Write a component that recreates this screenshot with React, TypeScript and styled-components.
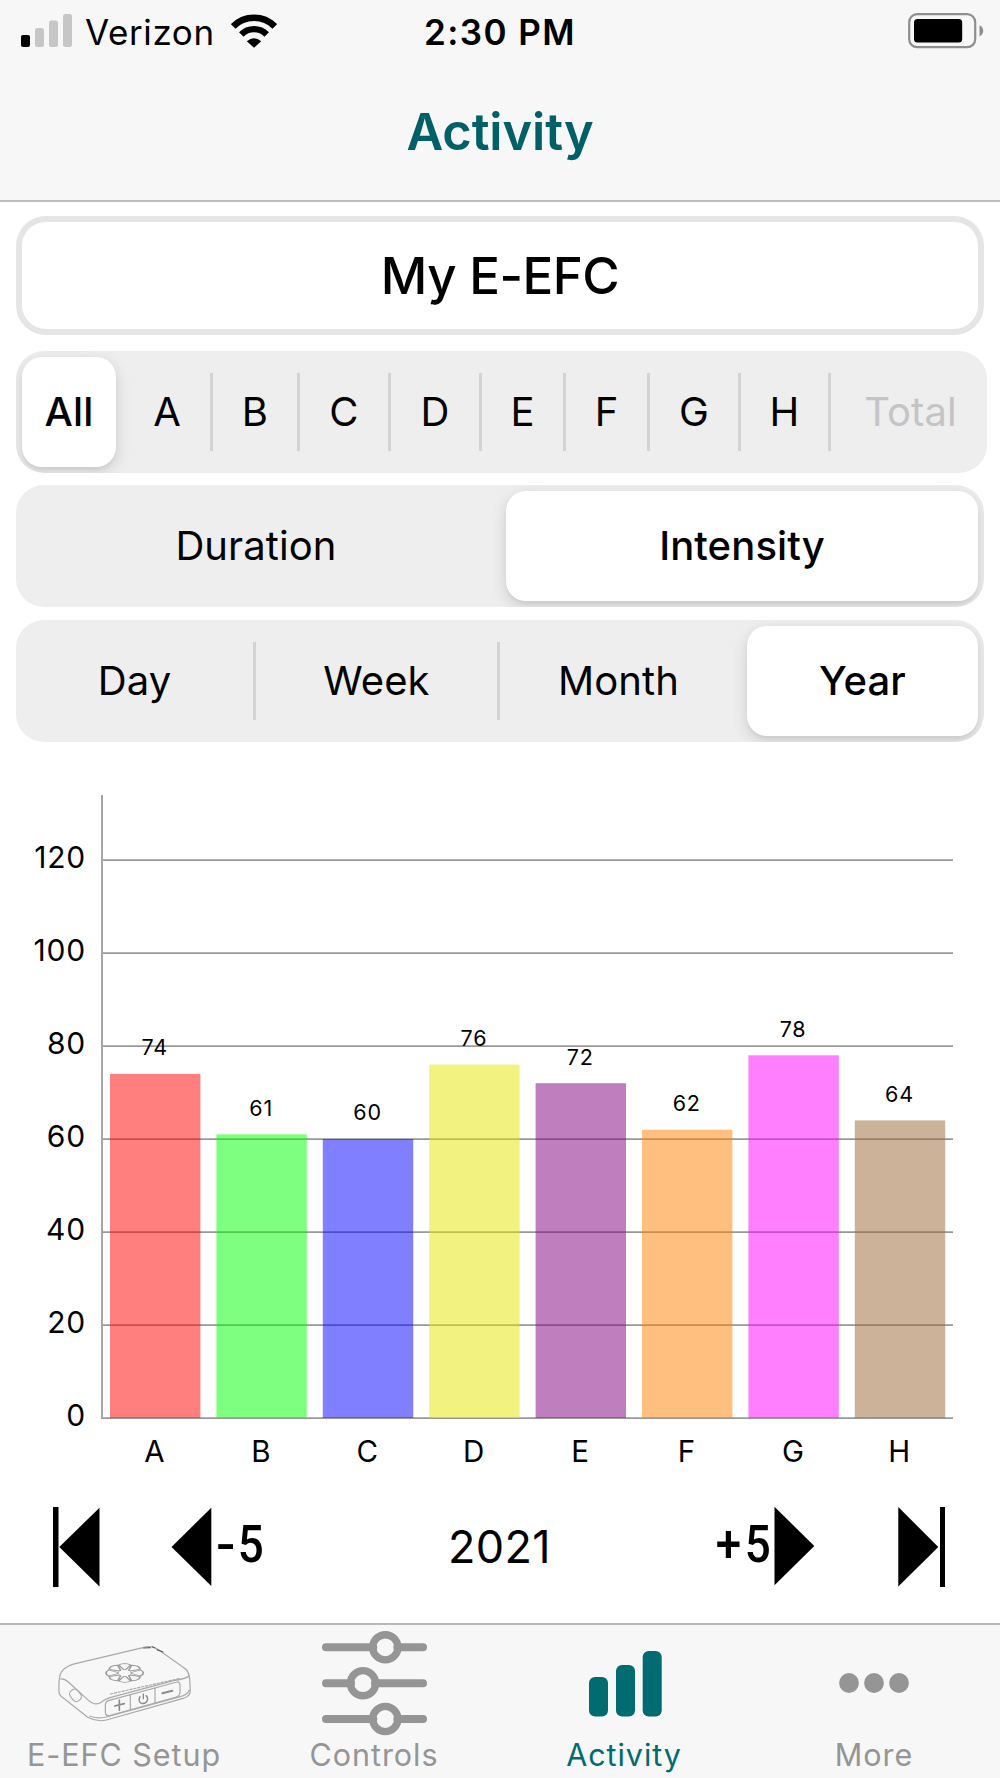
import React, { useState } from "react";
import styled, { createGlobalStyle, css } from "styled-components";

const GlobalStyle = createGlobalStyle`
  *, *::before, *::after { box-sizing: border-box; }
  body {
    margin: 0;
    background: #fff;
    font-family: Inter, "Liberation Sans", sans-serif;
    color: #000;
  }
`;

const Screen = styled.div`
  width: 1000px;
  height: 1778px;
  display: flex;
  flex-direction: column;
  overflow: hidden;
  background: #fff;
`;

const Header = styled.header`
  height: 202px;
  flex: none;
  display: flex;
  flex-direction: column;
  background: #f7f7f7;
  border-bottom: 2px solid #bcbcbc;
`;

const StatusBar = styled.div`
  height: 65px;
  padding: 0 16px;
  display: grid;
  grid-template-columns: 1fr auto 1fr;
  align-items: center;
`;

const Carrier = styled.div`
  display: flex;
  align-items: center;
  padding-left: 5px;
  font-size: 35px;
  line-height: 65px;

  svg {
    display: block;
    margin-top: -4px;
  }
`;

const CarrierName = styled.span`
  width: 158px;
  padding-left: 12px;
  letter-spacing: 0.6px;
`;

const Clock = styled.div`
  font-size: 35px;
  line-height: 65px;
  font-weight: 600;
  letter-spacing: 1.4px;
  white-space: pre;
`;

const BatterySlot = styled.div`
  display: flex;
  justify-content: flex-end;
  margin-top: -4px;
`;

const Title = styled.h1`
  margin: 33px 0 0;
  font-size: 50.5px;
  line-height: 68px;
  font-weight: 600;
  letter-spacing: -0.1px;
  text-align: center;
  color: #006067;
`;

const Controls = styled.section`
  height: 540px;
  flex: none;
  padding: 14px 13px 0 16px;
  display: flex;
  flex-direction: column;
  align-items: flex-start;
`;

const DeviceName = styled.div`
  width: 968px;
  height: 119px;
  margin-bottom: 16px;
  border: 6px solid #e5e5e5;
  border-radius: 30px;
  font-size: 51px;
  line-height: 107px;
  font-weight: 500;
  letter-spacing: -0.5px;
  text-align: center;
`;

const Track = styled.div<{ $width: number }>`
  width: ${(p) => p.$width}px;
  height: 122px;
  padding: 6px 0;
  display: flex;
  align-items: center;
  overflow: hidden;
  border-radius: 28px;
  background: #eeeeee;

  & + & {
    margin-top: 12.4px;
  }
`;

const Option = styled.button<{ $width: number; $lead?: number; $selected?: boolean }>`
  width: ${(p) => p.$width}px;
  height: 110px;
  margin: 0 0 0 ${(p) => p.$lead ?? 0}px;
  padding: 0;
  flex: none;
  border: 0;
  border-radius: 20px;
  background: none;
  color: #000;
  font: 400 40px/110px Inter, "Liberation Sans", sans-serif;
  letter-spacing: 0.1px;
  text-align: center;

  &:disabled {
    padding-left: 3px;
    color: #c4c4c6;
  }

  ${(p) =>
    p.$selected &&
    css`
      background: #fff;
      font-weight: 500;
      box-shadow: 0 5px 16px rgba(0, 0, 0, 0.14), 0 3px 3px rgba(0, 0, 0, 0.04);
    `}
`;

const Divider = styled.span`
  width: 3px;
  height: 78px;
  flex: none;
  background: #d3d3d5;
`;

const ChartArea = styled.section`
  height: 728px;
  flex: none;

  svg {
    display: block;
  }
`;

const Pager = styled.nav`
  height: 153px;
  flex: none;
  padding: 0 55px 0 53px;
  display: flex;
  align-items: center;

  svg {
    display: block;
    flex: none;
  }
`;

const PagerButton = styled.button<{ $ml?: number }>`
  margin: 0 0 0 ${(p) => p.$ml ?? 0}px;
  padding: 0;
  border: 0;
  background: none;
  color: #000;
  display: flex;
  align-items: center;
`;

const Step = styled.span<{ $width: number; $left?: number; $right?: number }>`
  width: ${(p) => p.$width}px;
  display: flex;
  align-items: center;
  justify-content: space-between;
  font: 500 52px/70px Roboto, "Liberation Sans", sans-serif;
  padding: 0 ${(p) => p.$right ?? 0}px 4px ${(p) => p.$left ?? 0}px;
`;

const Narrow = styled.span<{ $scale: number }>`
  display: inline-block;
  transform: scaleX(${(p) => p.$scale});
`;

const Period = styled.span`
  flex: 1;
  padding-left: 19px;
  font-size: 45px;
  line-height: 60px;
  letter-spacing: 0.3px;
  text-align: center;
`;

const TabBar = styled.footer`
  height: 155px;
  flex: none;
  display: grid;
  grid-template-columns: repeat(4, 1fr);
  background: #f7f7f7;
  border-top: 2px solid #b9b9b9;
`;

const Tab = styled.div<{ $active?: boolean }>`
  display: flex;
  flex-direction: column;
  align-items: center;
  padding-right: 2px;
  color: ${(p) => (p.$active ? "#006b71" : "#959595")};
`;

const TabIcon = styled.div<{ $left?: number; $top?: number }>`
  height: 116px;
  padding: ${(p) => p.$top ?? 0}px 0 0 ${(p) => p.$left ?? 0}px;
  display: flex;
  align-items: center;
  justify-content: center;

  svg {
    display: block;
  }
`;

const TabLabel = styled.span`
  font-size: 30.5px;
  line-height: 27px;
  letter-spacing: 0.95px;
  white-space: nowrap;
`;

const SignalIcon = () => (
  <svg width="52" height="34" viewBox="0 0 52 34">
    <rect x="0" y="21" width="9" height="12" rx="2" fill="#000" />
    <g fill="#c6c6c6">
      <rect x="14" y="14" width="9" height="19" rx="2.5" />
      <rect x="28" y="6.5" width="9" height="26.5" rx="2.5" />
      <rect x="42" y="0" width="9" height="33" rx="2.5" />
    </g>
  </svg>
);

const WifiIcon = () => (
  <svg width="46" height="34" viewBox="0 0 46 34">
    <g fill="none" stroke="#000" strokeWidth="6.4">
      <path d="M2.2 12.4A29.5 29.5 0 0 1 43.8 12.4" />
      <path d="M10.3 20.4A18 18 0 0 1 35.7 20.4" />
    </g>
    <path d="M23 33.8L15.8 27.3Q23 21 30.2 27.3Z" fill="#000" />
  </svg>
);

const BatteryIcon = () => (
  <svg width="76" height="36" viewBox="0 0 76 36">
    <rect x="1.2" y="1.2" width="66" height="33" rx="8" fill="none" stroke="#8e8e8e" strokeWidth="2.2" />
    <rect x="6" y="6" width="48.2" height="23.5" rx="3.5" fill="#000" />
    <path d="M71.5 12.2Q75.2 14 75.2 17.8T71.5 23.4Z" fill="#8e8e8e" />
  </svg>
);

const ToStartIcon = () => (
  <svg width="47" height="80" viewBox="0 0 47 80">
    <path d="M0 0H5.5V80H0ZM6.3 40L46.5 0.7V79.5Z" />
  </svg>
);

const BackIcon = () => (
  <svg width="41" height="80" viewBox="0 0 41 80">
    <path d="M0.5 40L40.3 0.7V79Z" />
  </svg>
);

const ForwardIcon = () => (
  <svg width="41" height="80" viewBox="0 0 41 80">
    <path d="M40.3 39L0.5 -0.2V78.3Z" />
  </svg>
);

const ToEndIcon = () => (
  <svg width="47" height="80" viewBox="0 0 47 80">
    <path d="M42 0H47V80H42ZM40.3 40L0.3 0V79.5Z" />
  </svg>
);

const petals = Array.from({ length: 8 }, (_, i) => i * 45);

const DeviceIcon = () => (
  <svg width="135" height="79" viewBox="170 100 405 237" fill="none" stroke="#a9a9a9" strokeWidth="3.6" strokeLinejoin="round" strokeLinecap="round">
    <path d="M176 245Q174 196 184 183Q192 170 216 161L428 111Q452 102 472 116L556 175Q566 184 568 206L570 240Q570 257 546 264L318 328Q290 335 262 320L190 263Q177 254 176 245Z" />
    <path d="M181 205Q190 203 204 214L262 267Q284 288 303 275Q312 265 340 258L520 210Q560 203 566 196" />
    <path d="M330 250L540 203" strokeDasharray="7 5" />
    <path d="M268 316Q292 326 318 319L540 258Q562 252 567 238" />
    <path d="M324 270L530 214Q538 213 539 222V245Q538 256 528 259L328 315Q316 316 315 305V282Q316 273 324 270ZM390 252V296M464 232V276" />
    <rect x="207" y="240" width="37" height="28" rx="12" transform="rotate(52 225.5 254)" />
    <path d="M343 286L372 279M357 268V299" stroke="#8b8b8b" strokeWidth="5" />
    <path d="M419 258Q412 272 423 278Q435 281 441 270Q444 260 437 255M429 250V264" stroke="#8b8b8b" strokeWidth="4" />
    <path d="M486 248L516 240" stroke="#8b8b8b" strokeWidth="6" />
    <g transform="translate(373 187) scale(1 .5)" strokeWidth="5" stroke="#999">
      {petals.map((a) => (
        <path key={a} transform={`rotate(${a})`} d="M-3 -20L-18 -48Q0 -64 18 -48L3 -20Z" />
      ))}
    </g>
    <path d="M430 112L450 111M456 108L464 112M470 117L488 124" stroke="#606060" strokeWidth="3.5" />
  </svg>
);

const SlidersIcon = () => (
  <svg width="105" height="105" viewBox="0 0 105 105" fill="none" stroke="#959595" strokeLinecap="round">
    {[
      [16.3, 63.3],
      [52.2, 41],
      [88, 63.3],
    ].map(([y, x]) => (
      <g key={y}>
        <path d={`M4 ${y}H${x - 12}M${x + 12} ${y}H101`} strokeWidth="8" />
        <path d={`M${x - 19} ${y}L${x - 12} ${y - 6}V${y + 6}ZM${x + 19} ${y}L${x + 12} ${y - 6}V${y + 6}Z`} fill="#959595" stroke="none" />
        <circle cx={x} cy={y} r="12.6" strokeWidth="7.4" />
      </g>
    ))}
  </svg>
);

const BarsIcon = () => (
  <svg width="73" height="66" viewBox="0 0 73 66" fill="#006b71">
    <rect x="0" y="26" width="19" height="39.5" rx="6" />
    <rect x="27" y="14" width="19" height="51.5" rx="6" />
    <rect x="53.7" y="0" width="19" height="65.5" rx="6" />
  </svg>
);

const DotsIcon = () => (
  <svg width="70" height="20" viewBox="0 0 70 20" fill="#959595">
    <circle cx="10" cy="10" r="9.9" />
    <circle cx="35" cy="10" r="9.9" />
    <circle cx="60" cy="10" r="9.9" />
  </svg>
);

const series = [
  { name: "A", value: 74, color: "#ff0000" },
  { name: "B", value: 61, color: "#00ff00" },
  { name: "C", value: 60, color: "#0000ff" },
  { name: "D", value: 76, color: "#e4e600" },
  { name: "E", value: 72, color: "#80007d" },
  { name: "F", value: 62, color: "#ff8000" },
  { name: "G", value: 78, color: "#ff00ff" },
  { name: "H", value: 64, color: "#996633" },
];

const ticks = [0, 20, 40, 60, 80, 100, 120];
const baseY = 676;
const unit = 4.65;
const yOf = (v: number) => baseY - v * unit;

const AxisText = styled.text`
  font: 400 30px Inter, sans-serif;
  letter-spacing: 0.8px;
`;

const CategoryText = styled.text`
  font: 400 29.5px Inter, sans-serif;
`;

const ValueText = styled.text`
  font: 400 21.5px Inter, sans-serif;
  letter-spacing: 0.8px;
`;

const Chart = () => (
  <svg width="1000" height="728" viewBox="0 0 1000 728">
    {ticks.map((t) => (
      <g key={t}>
        <line x1="102" x2="953" y1={yOf(t) + 0.2} y2={yOf(t) + 0.2} stroke="#999" strokeWidth="1.8" />
        <AxisText x="86" y={yOf(t) + 8.3} textAnchor="end">
          {t}
        </AxisText>
      </g>
    ))}
    <line x1="102" x2="102" y1="53" y2="677" stroke="#a6a6a6" strokeWidth="2" />
    {series.map((s, i) => {
      const x = 110 + i * 106.4;
      return (
        <g key={s.name}>
          <rect x={x} y={yOf(s.value)} width="90.4" height={s.value * unit} fill={s.color} fillOpacity="0.5" />
          <ValueText x={x + 44.7} y={yOf(s.value) - 18.7} textAnchor="middle">
            {s.value}
          </ValueText>
          <CategoryText x={x + 44.5} y={719.5} textAnchor="middle">
            {s.name}
          </CategoryText>
        </g>
      );
    })}
  </svg>
);

type Item = { label: string; width: number; lead?: number; divider?: boolean; disabled?: boolean };

const channels: Item[] = [
  { label: "All", width: 94, lead: 6 },
  { label: "A", width: 86, lead: 8, divider: true },
  { label: "B", width: 84, divider: true },
  { label: "C", width: 88, divider: true },
  { label: "D", width: 88, divider: true },
  { label: "E", width: 81, divider: true },
  { label: "F", width: 81, divider: true },
  { label: "G", width: 88, divider: true },
  { label: "H", width: 87, divider: true },
  { label: "Total", width: 156, disabled: true },
];

const metrics: Item[] = [
  { label: "Duration", width: 480 },
  { label: "Intensity", width: 472, lead: 10 },
];

const ranges: Item[] = [
  { label: "Day", width: 237, divider: true },
  { label: "Week", width: 241, divider: true },
  { label: "Month", width: 237 },
  { label: "Year", width: 231, lead: 10 },
];

const Segmented = ({ items, initial, width }: { items: Item[]; initial: string; width: number }) => {
  const [selected, setSelected] = useState(initial);
  return (
    <Track $width={width}>
      {items.map((it) => (
        <React.Fragment key={it.label}>
          <Option
            $width={it.width}
            $lead={it.lead}
            $selected={selected === it.label}
            disabled={it.disabled}
            onClick={() => setSelected(it.label)}
          >
            {it.label}
          </Option>
          {it.divider && <Divider />}
        </React.Fragment>
      ))}
    </Track>
  );
};

export default function App() {
  return (
    <Screen>
      <GlobalStyle />
      <Header>
        <StatusBar>
          <Carrier>
            <SignalIcon />
            <CarrierName>Verizon</CarrierName>
            <WifiIcon />
          </Carrier>
          <Clock>2:30 PM</Clock>
          <BatterySlot>
            <BatteryIcon />
          </BatterySlot>
        </StatusBar>
        <Title>Activity</Title>
      </Header>

      <Controls>
        <DeviceName>My E-EFC</DeviceName>
        <Segmented items={channels} initial="All" width={971} />
        <Segmented items={metrics} initial="Intensity" width={968} />
        <Segmented items={ranges} initial="Year" width={968} />
      </Controls>

      <ChartArea>
        <Chart />
      </ChartArea>

      <Pager>
        <PagerButton aria-label="First">
          <ToStartIcon />
        </PagerButton>
        <PagerButton $ml={71}>
          <BackIcon />
          <Step $width={54} $left={5}>
            <Narrow $scale={1.1}>-</Narrow>
            <Narrow $scale={0.88}>5</Narrow>
          </Step>
        </PagerButton>
        <Period>2021</Period>
        <PagerButton>
          <Step $width={60} $right={3}>
            <Narrow $scale={0.88}>+</Narrow>
            <Narrow $scale={0.88}>5</Narrow>
          </Step>
          <ForwardIcon />
        </PagerButton>
        <PagerButton $ml={83} aria-label="Last">
          <ToEndIcon />
        </PagerButton>
      </Pager>

      <TabBar>
        <Tab>
          <TabIcon>
            <DeviceIcon />
          </TabIcon>
          <TabLabel>E-EFC Setup</TabLabel>
        </Tab>
        <Tab>
          <TabIcon>
            <SlidersIcon />
          </TabIcon>
          <TabLabel>Controls</TabLabel>
        </Tab>
        <Tab $active>
          <TabIcon $left={2} $top={2}>
            <BarsIcon />
          </TabIcon>
          <TabLabel>Activity</TabLabel>
        </Tab>
        <Tab>
          <TabIcon>
            <DotsIcon />
          </TabIcon>
          <TabLabel>More</TabLabel>
        </Tab>
      </TabBar>
    </Screen>
  );
}
